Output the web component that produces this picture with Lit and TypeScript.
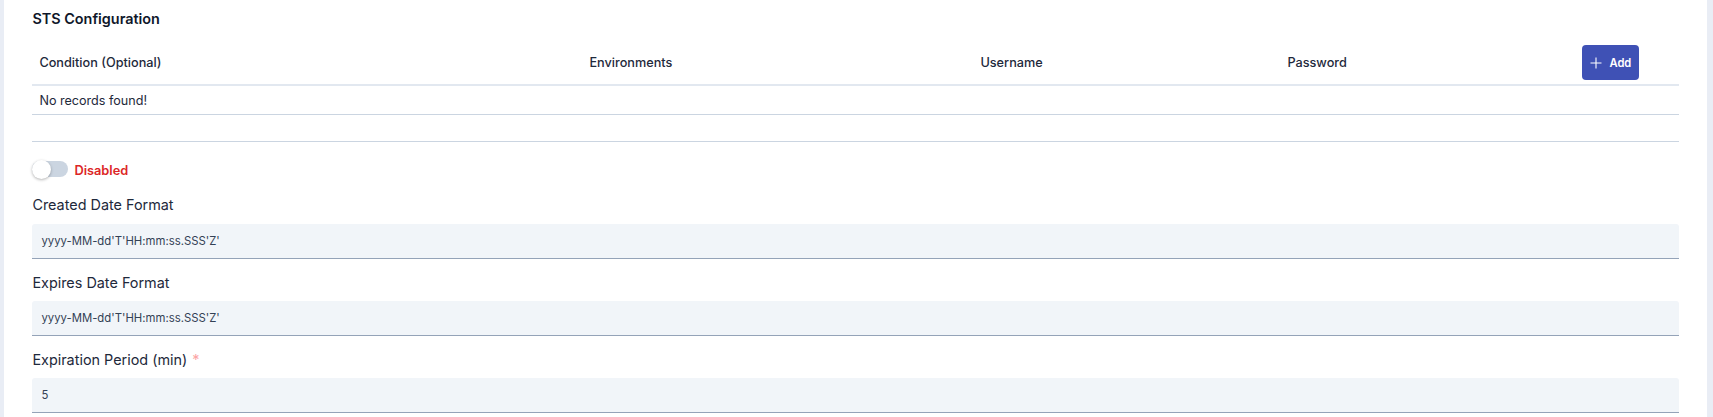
import { LitElement, html, css } from 'lit';
import { customElement } from 'lit/decorators.js';

@customElement('app-root')
export class AppRoot extends LitElement {
  static styles = css`
    :host {
      display: block;
      height: 417px;
      overflow: hidden;
      background: #e9edf5;
      font-family: Inter, "Liberation Sans", sans-serif;
      color: #1e293b;
    }
    .panel {
      margin: 0 6px 0 4px;
      background: #fff;
      height: 417px;
      padding: 9px 28px 0 28.4px;
      box-sizing: border-box;
    }
    h3 {
      margin: 0;
      font-size: 14.4px;
      line-height: 20px;
      font-weight: 600;
      color: #0f172a;
    }
    .thead {
      display: grid;
      grid-template-columns: 550px 391px 307px 295px 1fr;
      align-items: center;
      padding: 16px 0 4px 7px;
      border-bottom: 2px solid #e2e8f0;
      font-size: 12.7px;
      font-weight: 500;
    }
    .add {
      display: inline-flex;
      align-items: center;
      justify-content: center;
      gap: 7px;
      width: 57px;
      height: 35px;
      border: 0;
      border-radius: 4px;
      background: #3f51b5;
      color: #fff;
      font: 600 11.2px Inter, sans-serif;
      padding: 0;
    }
    .empty {
      height: 28px;
      line-height: 29px;
      padding-left: 7px;
      border-bottom: 1px solid #cbd5e1;
      font-size: 12.6px;
    }
    hr {
      border: 0;
      border-top: 1px solid #cbd5e1;
      margin: 26px 0 0;
    }
    .toggle-row {
      display: flex;
      align-items: center;
      gap: 6px;
      margin-top: 18px;
    }
    .toggle {
      position: relative;
      width: 36px;
      height: 16px;
      border-radius: 8px;
      background: #cbd5e1;
    }
    .knob {
      position: absolute;
      left: 0;
      top: -1px;
      width: 19px;
      height: 19px;
      border-radius: 50%;
      background: #fff;
      box-shadow: 0 1px 3px rgba(0, 0, 0, .3);
    }
    .state {
      font-size: 12.8px;
      font-weight: 600;
      color: #dc2626;
      padding-top: 3px;
    }
    label {
      display: block;
      font-size: 14.4px;
      line-height: 20px;
      margin: 14px 0 8px;
      color: #1e293b;
    }
    .toggle-row + label {
      margin: 17px 0 9px;
    }
    label span {
      color: #fca5a5;
      margin-left: 1px;
    }
    .input {
      height: 34px;
      line-height: 34px;
      background: #f1f5f9;
      border-bottom: 1px solid #94a3b8;
      border-radius: 3px 3px 0 0;
      font-size: 11.35px;
      padding-left: 9px;
      color: #334155;
    }
  `;

  render() {
    return html`
      <div class="panel">
        <h3>STS Configuration</h3>
        <div class="thead">
          <div>Condition (Optional)</div>
          <div>Environments</div>
          <div>Username</div>
          <div>Password</div>
          <div>
            <button class="add">
              <svg width="12" height="12" viewBox="0 0 12 12" fill="none" stroke="#fff" stroke-width="1.1"><path d="M6 .5v11M.5 6h11"/></svg>
              Add
            </button>
          </div>
        </div>
        <div class="empty">No records found!</div>
        <hr />
        <div class="toggle-row">
          <div class="toggle"><div class="knob"></div></div>
          <div class="state">Disabled</div>
        </div>
        <label>Created Date Format</label>
        <div class="input">yyyy-MM-dd'T'HH:mm:ss.SSS'Z'</div>
        <label>Expires Date Format</label>
        <div class="input">yyyy-MM-dd'T'HH:mm:ss.SSS'Z'</div>
        <label>Expiration Period (min) <span>*</span></label>
        <div class="input">5</div>
      </div>
    `;
  }
}
